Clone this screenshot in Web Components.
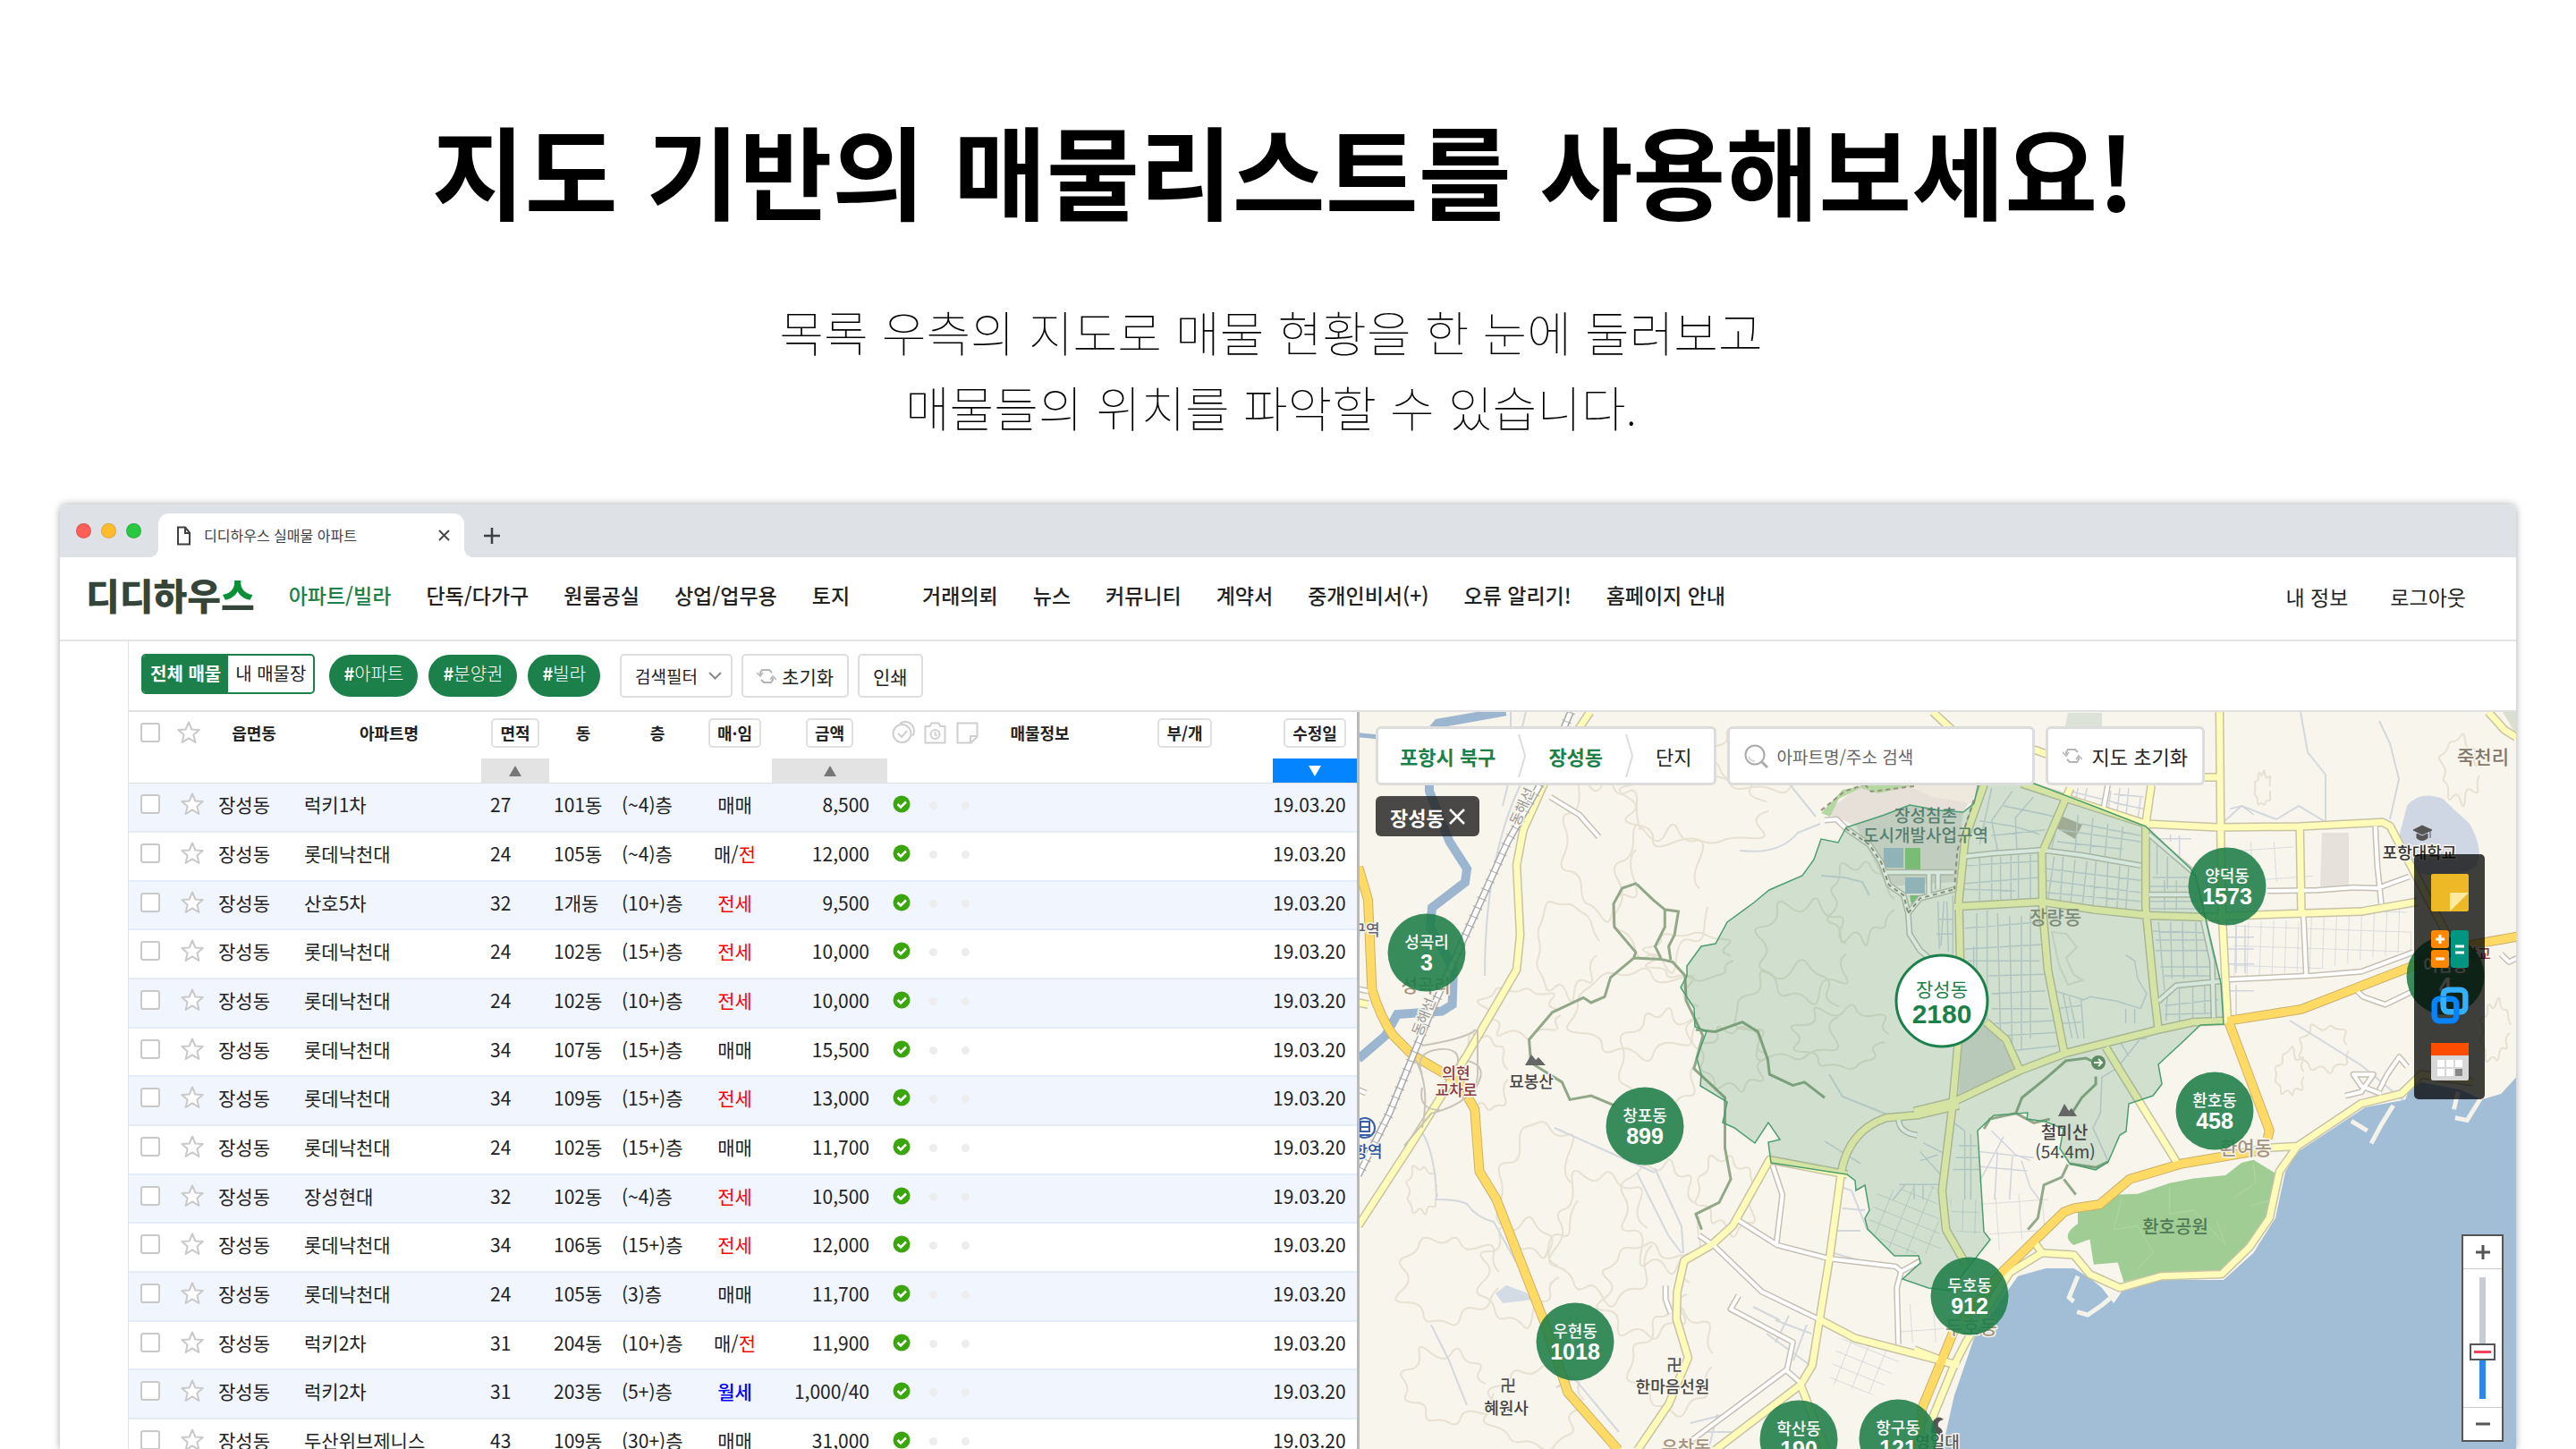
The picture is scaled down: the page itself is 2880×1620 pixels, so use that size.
<!DOCTYPE html>
<html lang="ko">
<head>
<meta charset="utf-8">
<title>디디하우스 실매물 아파트</title>
<style>
  html, body { margin: 0; height: 100%; }
  body {
    background: #fff; color: #222; overflow: hidden;
    font-family: "Noto Sans CJK KR", "Noto Sans", sans-serif;
    --green: #1b8049; --line: #e0e0e0;
  }
</style>
</head>
<body>
<promo-page>
  <promo-hero>
    <span slot="title">지도 기반의 매물리스트를 사용해보세요!</span>
    <span slot="line1">목록 우측의 지도로 매물 현황을 한 눈에 둘러보고</span>
    <span slot="line2">매물들의 위치를 파악할 수 있습니다.</span>
  </promo-hero>
  <browser-window>
    <span slot="tab">디디하우스 실매물 아파트</span>
    <site-nav></site-nav>
    <filter-bar slot="filters"></filter-bar>
    <listing-table slot="list"></listing-table>
    <map-panel slot="map">
      <map-pin x="75" y="269" count="3">성곡리</map-pin>
      <map-pin x="319" y="463" count="899">창포동</map-pin>
      <map-pin x="241" y="704" count="1018">우현동</map-pin>
      <map-pin x="491" y="813" count="190">학산동</map-pin>
      <map-pin x="602" y="812" count="121">항구동</map-pin>
      <map-pin x="682" y="653" count="912">두호동</map-pin>
      <map-pin x="956" y="446" count="458">환호동</map-pin>
      <map-pin x="970" y="195" count="1573">양덕동</map-pin>
      <map-pin x="1214" y="295" count="4">여남동</map-pin>
      <map-pin x="651" y="323" count="2180" active>장성동</map-pin>
    </map-panel>
  </browser-window>
</promo-page>

<script>
const base = `
  :host, *, *::before, *::after { box-sizing: border-box; }
  button, input, select { font: inherit; color: inherit; margin: 0; }
  button { background: none; border: 0; padding: 0; cursor: pointer; }
  a { color: inherit; text-decoration: none; }
  svg { display: block; }
`;
function define(name, markup, setup) {
  const tpl = document.createElement('template');
  customElements.define(name, class extends HTMLElement {
    constructor() {
      super();
      this.attachShadow({ mode: 'open' });
    }
    connectedCallback() {
      tpl.innerHTML = typeof markup === 'function' ? markup(this) : markup;
      this.shadowRoot.replaceChildren(tpl.content.cloneNode(true));
      if (setup) setup(this);
    }
  });
}

const refreshIcon = `<svg width="22" height="20" viewBox="0 0 22 20" fill="none" stroke="#b4b4b4" stroke-width="2">
  <path d="M4 8V6l2-3h8l3 3"/><path d="M0 6l4 4 3-4" stroke-width="1.5"/>
  <path d="M18 12v2l-2 3H8l-3-3"/><path d="M22 14l-4-4-3 4" stroke-width="1.5"/></svg>`;
const starIcon = `<svg width="26" height="26" viewBox="0 0 26 26" fill="#fff" stroke="#c9c9c9" stroke-width="2" stroke-linejoin="round">
  <path d="M13 1.5l3.4 8 8.3.6-6.3 5.5 2 8.4-7.4-4.6-7.4 4.6 2-8.4-6.3-5.5 8.3-.6z"/></svg>`;

define('promo-page', `<style>${base}
  :host { display: flex; flex-direction: column; height: 100vh; overflow: hidden; }
</style><slot></slot>`);

define('promo-hero', `<style>${base}
  :host { display: block; flex: none; text-align: center; color: #000; padding: 108px 0 67px; }
  h1 { margin: 0 10px 0 0; font-size: 113px; line-height: 160px; font-weight: 700; white-space: nowrap; }
  p { margin: 61px 38px 0 0; font-size: 54px; line-height: 84px; font-weight: 100; }
</style>
<h1><slot name="title"></slot></h1>
<p><slot name="line1"></slot><br><slot name="line2"></slot></p>`);

define('browser-window', `<style>${base}
  :host { display: flex; flex-direction: column; flex: 1; min-height: 0; margin: 0 67px; background: #fff;
    border-radius: 8px 8px 0 0; box-shadow: 0 0 8px rgba(0,0,0,.35); overflow: hidden; }
  header { display: flex; align-items: flex-end; height: 59px; flex: none; background: #dee1e6; }
  .lights { display: flex; gap: 11px; align-self: center; padding: 0 19px 0 18px; }
  .lights i { width: 17px; height: 17px; border-radius: 50%; border: 1px solid rgba(0,0,0,.12); }
  .tab { position: relative; display: flex; align-items: center; width: 342px; height: 49px; padding: 0 16px 0 20px;
    background: #fff; border-radius: 12px 12px 0 0; font-size: 16px; color: #3c4043; }
  .tab::before, .tab::after { content: ""; position: absolute; bottom: 0; width: 10px; height: 10px; }
  .tab::before { left: -10px; background: radial-gradient(circle at 0 0, transparent 10px, #fff 10px); }
  .tab::after { right: -10px; background: radial-gradient(circle at 100% 0, transparent 10px, #fff 10px); }
  .tab span { flex: 1; padding: 0 0 2px 14px; }
  .plus { height: 49px; padding-left: 22px; }
  .body { display: flex; flex: 1; min-height: 0; }
  aside { width: 77px; flex: none; border-right: 1px solid var(--line); }
  .work { display: flex; flex-direction: column; flex: 1; min-width: 0; }
  .split { display: flex; flex: 1; min-height: 0; }
  .list { flex: 1373 1 0; min-width: 0; overflow: hidden; }
  .map { flex: 1296 1 0; min-width: 0; display: flex; }
</style>
<header>
  <div class="lights"><i style="background:#ff5f57"></i><i style="background:#ffbd2e"></i><i style="background:#28c940"></i></div>
  <div class="tab">
    <svg width="17" height="22" viewBox="0 0 17 22" fill="none" stroke="#3c4043" stroke-width="2"><path d="M2 1.500h8l5 6V20.500H2z"/><path d="M10 2v6h5"/></svg>
    <span><slot name="tab"></slot></span>
    <button aria-label="탭 닫기"><svg width="13" height="13" viewBox="0 0 13 13" stroke="#45494d" stroke-width="2"><path d="M1 1l11 11M12 1L1 12"/></svg></button>
  </div>
  <button class="plus" aria-label="새 탭"><svg width="18" height="18" viewBox="0 0 18 18" stroke="#3c4043" stroke-width="2.500"><path d="M9 0v18M0 9h18"/></svg></button>
</header>
<slot></slot>
<div class="body"><aside></aside>
  <div class="work"><slot name="filters"></slot>
    <div class="split"><div class="list"><slot name="list"></slot></div><div class="map"><slot name="map"></slot></div></div>
  </div>
</div>`);

define('site-nav', `<style>${base}
  :host { display: flex; align-items: center; flex: none; height: 94px; padding: 0 56px 8px 29px; border-bottom: 2px solid #e4e4e4; font-size: 23px; white-space: nowrap; }
  .logo { font-size: 41px; line-height: 52px; font-weight: 900; color: #36453a; margin-right: 38px; padding-bottom: 2px; }
  .logo b { font-weight: 900; color: transparent; background: linear-gradient(#0a9039 66%, #36453a 66%); -webkit-background-clip: text; background-clip: text; }
  nav, .me { display: flex; }
  nav { gap: 39px; font-weight: 500; }
  nav .on { color: var(--green); }
  nav .gap { margin-left: 42px; }
  .me { margin-left: auto; gap: 47px; padding-top: 4px; }
</style>
<a class="logo" href="#">디디하우<b>스</b></a>
<nav>
  <a class="on" href="#">아파트/빌라</a><a href="#">단독/다가구</a><a href="#">원룸공실</a><a href="#">상업/업무용</a><a href="#">토지</a>
  <a class="gap" href="#">거래의뢰</a><a href="#">뉴스</a><a href="#">커뮤니티</a><a href="#">계약서</a><a href="#">중개인비서(+)</a><a href="#">오류 알리기!</a><a href="#">홈페이지 안내</a>
</nav>
<div class="me"><a href="#">내 정보</a><a href="#">로그아웃</a></div>`);

define('filter-bar', `<style>${base}
  :host { display: flex; align-items: center; flex: none; height: 79px; padding: 0 14px; border-bottom: 2px solid var(--line); font-size: 20px; white-space: nowrap; }
  .seg { display: flex; height: 45px; margin: 0 16px 4px 0; border: 2px solid var(--green); border-radius: 5px; overflow: hidden; }
  .seg button { padding: 0 8px 3px; }
  .seg .on { background: var(--green); color: #fff; font-weight: 700; }
  .tags { display: flex; gap: 12px; margin-right: 22px; }
  .tags button { height: 47px; padding: 0 16px 6px; border-radius: 24px; background: var(--green); color: #fff; font-weight: 300; }
  .tags b { font-weight: 700; }
  .tools { display: flex; gap: 10px; }
  .tools button, .pick { display: flex; align-items: center; height: 49px; border: 2px solid #dedede; border-radius: 5px; background: #fff; }
  .tools button { gap: 6px; padding: 0 15px; font-size: 21px; }
  .pick { position: relative; font-size: 19px; }
  select { appearance: none; border: 0; background: none; width: 122px; height: 45px; padding: 0 36px 0 15px; }
  .pick svg { position: absolute; right: 10px; pointer-events: none; }
</style>
<div class="seg"><button class="on">전체 매물</button><button>내 매물장</button></div>
<div class="tags"><button><b>#</b>아파트</button><button><b>#</b>분양권</button><button><b>#</b>빌라</button></div>
<div class="tools">
  <div class="pick"><select aria-label="검색필터"><option>검색필터</option></select>
    <svg width="15" height="9" viewBox="0 0 15 9" fill="none" stroke="#888" stroke-width="2"><path d="M1 1l6.500 6.500L14 1"/></svg></div>
  <button>${refreshIcon}초기화</button><button>인쇄</button>
</div>`);

const rows = [
  ['럭키1차','27','101동','(~4)층','매매','8,500'],
  ['롯데낙천대','24','105동','(~4)층','매/전','12,000'],
  ['산호5차','32','1개동','(10+)층','전세','9,500'],
  ['롯데낙천대','24','102동','(15+)층','전세','10,000'],
  ['롯데낙천대','24','102동','(10+)층','전세','10,000'],
  ['롯데낙천대','34','107동','(15+)층','매매','15,500'],
  ['롯데낙천대','34','109동','(15+)층','전세','13,000'],
  ['롯데낙천대','24','102동','(15+)층','매매','11,700'],
  ['장성현대','32','102동','(~4)층','전세','10,500'],
  ['롯데낙천대','34','106동','(15+)층','전세','12,000'],
  ['롯데낙천대','24','105동','(3)층','매매','11,700'],
  ['럭키2차','31','204동','(10+)층','매/전','11,900'],
  ['럭키2차','31','203동','(5+)층','월세','1,000/40'],
  ['두산위브제니스','43','109동','(30+)층','매매','31,000']
];
const deal = t => t === '매/전' ? '매/<em>전</em>' : t === '전세' ? '<em>전세</em>' : t === '월세' ? '<u>월세</u>' : t;
const okIcon = `<svg width="20" height="20" viewBox="0 0 20 20"><circle cx="10" cy="10" r="9.500" fill="#3aa60c"/><path d="M5.500 10l3.500 3.500 6-6" fill="none" stroke="#fff" stroke-width="2.500"/></svg>`;

define('listing-table', `<style>${base}
  :host { display: block; }
  table { width: 100%; table-layout: fixed; border-collapse: separate; border-spacing: 0; font-size: 21px; line-height: 28px; white-space: nowrap; }
  th, td { padding: 0; vertical-align: middle; }
  th { height: 52px; padding-bottom: 6px; font-size: 18px; font-weight: 700; }
  th button { height: 33px; padding: 0 8px 2px; border: 2px solid var(--line); border-radius: 5px; font-weight: 700; }
  .sort th { height: 28px; padding: 0; border-bottom: 1px solid var(--line); }
  .sort .bar { background: #e3e3e3; }
  .sort .desc { background: #0584ff; }
  th svg, td svg { margin: 0 auto; }
  td { height: 55px; padding-bottom: 7px; border-bottom: 2px solid #e3ecf8; }
  tbody tr:nth-child(3n) td { height: 54px; }
  tbody tr:nth-child(odd) { background: #f0f5fe; }
  .c { text-align: center; }
  .dong, .name { padding-left: 8px; } .area { padding-left: 10px; } .bd, .fl { padding-left: 5px; }
  .price { text-align: right; padding-right: 20px; }
  .date { text-align: right; padding-right: 19px; }
  .flag { padding-right: 3px; }
  em { font-style: normal; color: #f00; } u { text-decoration: none; color: #00f; font-weight: 500; }
  input { appearance: none; display: block; width: 22px; height: 22px; margin: 0 auto; border: 2px solid #c9c9c9; border-radius: 3px; background: #fff; }
  td .star { display: block; margin-left: 10px; } th .star { border: 0; padding: 0; height: auto; display: block; margin-left: 6px; }
  .dot { display: block; width: 9px; height: 9px; border-radius: 50%; background: #ededed; margin: 3px auto 0; }
</style>
<table>
  <colgroup>${[48,44,96,206,76,76,90,83,129,35,36,36,127,197,94].map(w => `<col style="width:${w}px">`).join('')}</colgroup>
  <thead>
    <tr><th><input type="checkbox" aria-label="전체 선택"></th><th><button class="star" aria-label="관심 매물">${starIcon}</button></th>
      <th>읍면동</th><th>아파트명</th><th><button>면적</button></th><th>동</th><th>층</th><th><button>매·임</button></th><th><button>금액</button></th>
      <th><svg width="26" height="26" viewBox="0 0 26 26" fill="none" stroke="#cfcfcf" stroke-width="2"><circle cx="11.500" cy="14" r="10"/><path d="M9 3a10 10 0 0 1 14 14M7 14l4 4 6-7"/></svg></th>
      <th><svg width="25" height="25" viewBox="0 0 25 25" fill="none" stroke="#cfcfcf" stroke-width="2"><path d="M1.500 5h5l2-3.500h8l2 3.500h5v18.500h-22z"/><circle cx="12.500" cy="14" r="5"/><path d="M12.500 11v3l2 2"/></svg></th>
      <th><svg width="25" height="25" viewBox="0 0 25 25" fill="none" stroke="#cfcfcf" stroke-width="2"><path d="M1.500 1.500h22v15l-7 7h-15z"/><path d="M23 16h-7v7"/></svg></th>
      <th>매물정보</th><th><button>부/개</button></th><th><button>수정일</button></th></tr>
    <tr class="sort"><th></th><th></th><th></th><th></th><th class="bar"><svg width="14" height="12"><path d="M7 0l7 12H0z" fill="#777"/></svg></th><th></th><th></th><th></th>
      <th class="bar"><svg width="14" height="12"><path d="M7 0l7 12H0z" fill="#777"/></svg></th><th></th><th></th><th></th><th></th><th></th>
      <th class="desc"><svg width="14" height="12"><path d="M7 12L0 0h14z" fill="#fff"/></svg></th></tr>
  </thead>
  <tbody>${rows.map(r => `<tr><td><input type="checkbox" aria-label="${r[0]} 선택"></td><td><button class="star" aria-label="관심 매물">${starIcon}</button></td>
    <td class="dong">장성동</td><td class="name">${r[0]}</td><td class="area">${r[1]}</td><td class="bd">${r[2]}</td><td class="fl">${r[3]}</td>
    <td class="c">${deal(r[4])}</td><td class="price">${r[5]}</td><td class="flag">${okIcon}</td><td class="flag"><i class="dot"></i></td><td class="flag"><i class="dot"></i></td><td></td><td></td><td class="date">19.03.20</td></tr>`).join('')}</tbody>
</table>`);

define('map-pin', el => `<style>${base}
  :host { position: absolute; left: ${el.getAttribute('x')}px; top: ${el.getAttribute('y')}px; transform: translate(-50%, -50%); }
  button { display: flex; flex-direction: column; align-items: center; justify-content: center; width: 87px; height: 87px; border-radius: 50%;
    background: rgba(27,124,70,.87); color: #fff; font-size: 18px; font-weight: 500; line-height: 21px; }
  b { font: 700 25px/26px "Liberation Sans", sans-serif; }
  :host([active]) button { width: 105px; height: 105px; background: #fff; border: 3px solid var(--green); color: var(--green); font-size: 21px; line-height: 28px; font-weight: 400; }
  :host([active]) b { font-size: 30px; line-height: 30px; }
</style>
<button><slot></slot><b>${el.getAttribute('count')}</b></button>`);

/* Map drawing: survey tiles (west, east, district) share one canvas. */
const T = { w: 'translate(1510 940) scale(.4337)', e: 'translate(2140 940) scale(.4464 .4337)', d: 'translate(2040 860) scale(.3333)', n: '' };
const roads = [
  ['white','w','M1088 835L1113 910 1098 1035M990 970L1100 1040 1235 1075 1405 1095 1420 1108 1470 1080M898 1015L935 1040 1060 1160 1205 1230M1000 1170L980 1205 1140 1290 1125 1360 870 1550M1120 1360L1160 1395M1420 1105L1408 1150 1412 1295M812 1145L812 1180 825 1215M515 -115L590 -69 640 -12M20 380L45 385M20 640L40 648'],
  ['white','e','M885 127L1010 125 1100 118 1160 120 1240 90M1155 -40L1160 60 1170 160M975 190L982 345M790 355L1000 345 1120 335 1250 285M1110 385L1125 400 1180 420 1260 380M1080 655L1120 645 1150 600 1100 600 1120 630 1170 650M1165 640L1185 600 1215 555 1235 580M1470 290L1490 310 1510 300'],
  ['white','d','M0 168L40 165 70 195 150 250 190 310 215 385 265 420 280 480 285 550 320 605 350 630M205 343L432 343M350 343V420M380 343V400M280 480L320 430 435 400M465 290L560 280 730 268 860 285 1060 320M1088 418H1230M1270 505L1300 640 1305 830M1120 775L1180 722 1330 708M248 1172Q250 1215 310 1225M950 50L935 130M1088 215L1240 345'],
  ['yellow','w','M617 -334L520 -190 497 -146 445 -30 428 60 437 240 428 330 300 550 150 790 20 990M1280 858L1080 820 985 990 930 1040 860 1080 842 1160 840 1230 870 1330 820 1450 740 1568M1265 850L1235 1070 1190 1350 1160 1400 940 1568M1205 1230L1300 1280 1568 1350M1160 1400L1225 1568M20 415L45 420M1265 850Q1285 745 1380 712L1460 705 1568 680'],
  ['yellow','n','M2161 795L2190 822 2277 838 2310 850M2782 795L2800 815 2813 823M2465 868H2482'],
  ['yellow','e','M175 -147L128 -10 112 150 118 430 95 690 70 900 80 1000 130 1090M391 -138L320 30 322 180 335 330 375 540M100 168L320 155 450 175 590 190 730 195 880 188 1120 180 1260 155M594 -146L580 -46 580 170 600 380 612 485M269 -150L372 -115 580 -46 760 -37 966 -39 1174 -50 1192 -40 1340 250M765 -334L768 0 772 200 785 460M966 -36L970 188M0 695L100 670 265 590 380 545 610 485 700 465 780 462M180 465L230 510 265 590M480 530L660 830M870 790L960 785 1120 675 1220 650 1270 600 1400 620M960 785L915 850 890 970 840 1045 770 1115 620 1120 515 1150 440 1115 400 1065 320 1060 240 1110 130 1290 100 1350 40 1500M300 1030L320 1060M0 1310L90 1345'],
  ['orange','w','M20 65L45 150 55 380Q75 450 110 500L160 550 280 620 320 690 332 850 375 920 500 1240 560 1420 690 1568'],
  ['orange','e','M785 462L970 432 1250 320 1400 265 1510 245M788 465L890 745 885 765M870 795L670 830 540 870 465 935 400 945 375 955 220 1110 100 1260 20 1460 10 1568']
];
const style = { white: ['#c6c0b4', 7, '#fff', 4], yellow: ['#c8c3a6', 10, '#fffbb8', 7], orange: ['#cdb06a', 11, '#ffdb66', 9] };
const stroke = (i, j) => roads.map(([k, t, d]) => `<path transform="${T[t]}" d="${d}" stroke="${style[k][i]}" stroke-width="${style[k][j]}"/>`).join('');

/* Contour rings with a repeatable wobble. */
let seed = 7;
const rnd = () => (seed = (seed * 16807) % 2147483647) / 2147483647;
function ring(cx, cy, rx, ry) {
  const n = 18, p = [];
  for (let i = 0; i < n; i++) {
    const a = i / n * Math.PI * 2, k = (i % 2 ? .5 : .85) + rnd() * .35;
    p.push([cx + Math.cos(a) * rx * k, cy + Math.sin(a) * ry * k]);
  }
  let d = '';
  p.forEach((q, i) => { const r = p[(i + 1) % n], m = [(q[0] + r[0]) / 2, (q[1] + r[1]) / 2].map(Math.round); d += i ? `Q${Math.round(q[0])} ${Math.round(q[1])} ${m}` : `M${m}`; });
  return d;
}
const rings = [[1860,1000,60,90],[1900,900,90,50],[1790,940,50,90],[1980,850,90,40],[1830,1130,80,60],[1860,1180,50,70],[1750,1060,40,60],[1720,1330,50,90],[1790,1380,60,80],
 [1700,1420,50,60],[1840,1440,60,60],[1860,1350,50,70],[1620,1430,60,60],[1620,1550,60,50],[1720,1570,60,50],[1870,1520,50,60],[2020,1060,60,60],[2000,1130,70,60],[2080,1010,40,50],[2060,1160,60,40],
 [1940,1180,40,40],[1930,1330,40,50],[2600,1170,30,30],[2560,1200,20,30],[2750,860,25,40],[2530,880,10,20],[1660,1200,30,50],[1590,1330,20,30],[2790,1150,20,40],[1890,1070,60,30],[1700,1130,50,30]]
 .map(r => `<path d="${ring(...r)}"/>`).join('');

/* Local streets inside the district tile. */
const streets = 'M560 60L520 250M630 70L560 170 580 270M700 90L640 160 645 270M520 170L640 190 720 215M600 120L770 155M560 220L740 200M790 130L760 270M850 150L840 270M900 160L890 280M950 180L940 290M1000 190L990 300M790 200L1060 240M860 180L1060 220M780 240L1000 265' +
  'M520 290V440M560 290V440M590 290V440M625 285V435M650 285V435M690 280V430M470 320L720 305M470 380L720 360M465 400L640 405M770 290L750 430M800 290L790 440M840 300L825 445M880 305L865 450M910 305L900 460M950 310L945 465M990 320L980 470M1020 325L1010 470M740 330L1060 370M740 370L1060 410M740 410L1060 440' +
  'M510 480V700M545 470V900M580 480L590 900M620 490L630 980M660 490V940M690 480V900M470 530L720 510M470 600L730 585M480 640L720 640M550 690L740 685M560 750L740 740M560 800L750 800M570 850L770 840M600 890L780 880M640 940L780 925M500 590V690M400 440L390 590M380 440L385 600M410 440L415 610M430 420V620M380 500H430M375 550H430' +
  'M1120 510L1140 740M1160 510L1165 700M1200 510L1205 700M1245 510L1250 690M1100 540L1270 545M1110 570H1280M1110 605H1290M1125 660H1300M1140 690L1300 690M1100 360H1220M1090 390H1220M1140 370V470M1180 370V470M1090 440H1260M1090 465H1260M1115 230V350M1150 290V400M1150 740L1145 840M1190 730V840M1235 720V830M1275 720V820M1140 790L1320 770M1140 820L1300 815' +
  'M770 740L870 770 890 760 980 775 1060 800M800 750L830 900M820 760L850 900M770 800L860 790M790 850L860 845M860 770L870 900M1010 620L1040 640 1050 700 1080 750 1060 800M1010 800V850M1040 800V850M1060 900L980 1000 930 1030 925 1150 900 1200 950 1310M990 910L1020 960M940 910L1080 900' +
  'M540 60L520 80M820 70L1020 120M850 60L840 110M880 60L870 110M960 70L950 140M990 60L980 150M1020 60L1010 160M1060 90L1050 170M970 80L1070 90M970 110L1070 130' +
  'M1090 230H1230M1160 215V240M1190 220V300M1360 130L1400 120 1440 150M1345 560H1440M1345 600H1440M1380 520V680M1410 520V680M1345 650H1440M1350 740H1440M1380 720V820' +
  'M0 1245L120 1320M320 1280L400 1370M330 1250L410 1290M320 1310L380 1290M470 1210L430 1180M450 1260H510M440 1300H520M430 1340L520 1340M470 1210V1440M490 1220V1440M250 1390L390 1390M230 1440L270 1390M300 1390V1440M330 1390V1440M520 1280L700 1300M560 1210L640 1290 690 1310M600 1230L520 1380M660 1310L690 1400 720 1440M520 1330L680 1345M580 1280L570 1440M630 1290L620 1440';
const quad = (pts, p) => `<polygon points="${pts}" fill="url(#${p})"/>`;
const label = (x, y, s, c, t, w = 500, h = 3) => `<text x="${x}" y="${y}" font-size="${s}" fill="${c}" font-weight="${w}" stroke-width="${h}">${t}</text>`;
const district = 'M2274 875L2340 900 2399 923 2449 970 2455 979 2483 1098 2486 1144 2460 1145 2439 1165 2413 1189 2417 1211 2407 1224 2380 1233 2377 1264 2370 1268 2357 1298 2343 1307 2314 1300 2303 1283 2307 1261 2287 1253 2266 1250 2267 1243 2229 1246 2211 1263 2218 1376 2225 1385 2180 1442 2156 1439 2127 1429 2147 1411 2145 1403 2118 1403 2088 1373 2085 1361 2090 1352 2085 1324 2075 1330 2074 1319 2065 1312 1980 1299 1977 1276 1990 1273 1977 1254 1962 1277 1939 1260 1926 1254 1931 1231 1901 1213 1902 1200 1897 1182 1908 1152 1895 1147 1894 1126 1879 1103 1886 1090 1886 1079 1902 1057 1918 1054 1931 1030 1961 1008 1978 994 2015 978 2028 960 2036 937 2055 941 2064 924 2098 913 2107 910 2135 899 2168 905 2195 907 2207 897 2212 875z';

const mapSvg = `<svg viewBox="1520 795 1293 825" preserveAspectRatio="xMinYMin slice" aria-label="포항시 북구 지도">
<defs>
  <pattern id="g1" width="14" height="22" patternUnits="userSpaceOnUse" patternTransform="rotate(2)"><path d="M0 0H14M0 0V22" stroke="#d0d4d9" stroke-width="1.500" fill="none"/></pattern>
  <pattern id="g2" width="20" height="15" patternUnits="userSpaceOnUse" patternTransform="rotate(22)"><path d="M0 0H20M0 0V15" stroke="#d0d4d9" stroke-width="1.500" fill="none"/></pattern>
  <pattern id="g3" width="26" height="34" patternUnits="userSpaceOnUse" patternTransform="rotate(-4)"><path d="M0 0H26M0 0V34" stroke="#d0d4d9" stroke-width="1.500" fill="none"/></pattern>
</defs>
<rect x="1520" y="795" width="1293" height="825" fill="#f8f5ec"/>
<path d="M2040 908L2080 877H2212L2195 907 2186 985 2110 990 2075 922z" fill="#e6e0d9"/>
<path d="M2132 877H2212L2204 897 2160 890z" fill="#efe8dc"/>
<path d="M2036 908L2060 882 2085 877 2140 877 2100 886 2080 880 2056 892 2046 912z" fill="#b5d8a3"/>
<path d="M2036 905L2062 884 2084 876M2085 876L2092 884 2140 878" fill="none" stroke="#9a8f80" stroke-width="2" stroke-dasharray="5 4"/>
<path d="M2596 930H2626V990H2594z" fill="#e6e2db"/><path d="M2312 796h38v18h-42z" fill="#dde2d8"/><path d="M2798 795h15v25z" fill="#dadfd2"/>
<path d="M2304 911l24 10-8 16-24-14z" fill="#bdb5a6"/>
<path d="M2193 1150L2221 1140 2257 1193 2190 1222z" fill="#dcdad2"/>
<path d="M2691 900Q2705 882 2731 892L2761 920Q2778 950 2768 968 2740 984 2700 974L2682 935z" fill="#ced7e3"/>
<path d="M1672 1445L1684 1436 1706 1444 1714 1452 1680 1456z" fill="#d3dbe4"/>
<g fill="none" stroke="#e7e1d2" stroke-width="2">${rings}<path d="M2294 1041L2310 1043 2322 1058 2310 1070 2318 1088 2328 1095 2312 1100 2302 1078z"/></g>
<g fill="none" stroke="#d3d8dd" stroke-width="2">
  <path d="M1689 795V850M1700 876Q1660 960 1660 1090M1706 795L1680 900M1738 1260L1850 1310M1850 1305L1880 1370 1882 1400M1830 1310L1865 1380 1880 1400M1590 1265Q1605 1290 1606 1340 1630 1340 1640 1345 1650 1360 1670 1365L1695 1410M2572 795L2580 840 2600 865 2600 925M2660 805L2672 830 2682 870 2672 915M2486 918L2506 900 2545 915 2570 900 2600 918M2001 876L2030 912M1945 950Q1990 955 2010 930L2035 920M2560 1140L2640 1190 2700 1240M1740 1550L1760 1540 1810 1600M1600 1480L1620 1520 1640 1570M2036 978L2062 980 2082 985 2090 1000M2045 1200L2060 1225 2110 1245 2150 1242"/>
  <path d="M2055 1325L2070 1330 2088 1375M2050 1400L2085 1410M2060 1350L2085 1352M2050 1375L2080 1375M1975 1490L2030 1530M1985 1475L2025 1490M2000 1470L1985 1500M2020 1480L2005 1520M2030 1490L2020 1530M1960 1460L1990 1475M1890 1590L1930 1580M1900 1600L1940 1600M1920 1580L1910 1620"/>
</g>
<path transform="${T.d}" d="${streets}" fill="none" stroke="#d0d4dc" stroke-width="1.500"/>
${quad('2497,1030 2570,1028 2575,1085 2497,1092','g1')}${quad('2580,1025 2690,1015 2700,1060 2580,1085','g1')}
${quad('2213,1340 2290,1330 2290,1370 2230,1400','g3')}${quad('2100,1330 2165,1325 2170,1400 2118,1400 2088,1370','g2')}
${quad('2180,1340 2210,1340 2215,1380 2185,1375','g1')}${quad('2120,1455 2170,1460 2175,1500 2125,1500','g3')}
${quad('2055,1495 2130,1510 2100,1560 2045,1545','g2')}${quad('2500,940 2560,940 2590,985 2500,985','g3')}
<path d="M2106 947h22v22h-22zM2130 980h22v18h-22z" fill="#a9bfcf"/><path d="M2130 947h17v24h-17zM2135 1000h14l-12 10z" fill="#8fc97f"/>
<g fill="none" stroke="#9cb6d0" stroke-width="10" transform="${T.w}">
  <path d="M400 -336L225 -305 200 -275 203 -130 255 0 300 70 295 105 210 170 205 220 245 290 265 330 262 420 235 437 120 445 90 500 20 560"/><path stroke-width="5" d="M20 -275L90 -268"/></g>
<g transform="${T.e}"><path d="M1510 605L1470 650 1420 665 1370 640 1270 620 1240 640 1230 665 1130 685 960 800 930 850 905 970 850 1060 775 1130 620 1130 520 1160 500 1190 470 1150 440 1125 400 1100 330 1100 260 1120 150 1280 100 1430 70 1568H1510z" fill="#a2bdd6"/>
  <path d="M410 955L500 910 560 908 640 880 700 868 780 860 820 828 850 820 905 855 890 970 840 1045 770 1110 620 1112 525 1135 510 1085 450 1090 440 1025 400 1040Q365 1015 410 985z" fill="#9fcd94"/>
  <g fill="none" stroke="#b0d6a4"><path d="M520 920L500 1000 560 990 600 1060 560 1100M640 890V960L700 950 780 1040 760 980M840 940L890 925M850 830L855 880 800 920"/></g>
  <g fill="none" stroke="#f5f2ea"><path class="pier" d="M410 1120L388 1175 400 1185M505 1165L470 1195 435 1220 408 1212M1200 680L1170 730 1145 778M1095 720L1135 745M1362 645L1352 690M1420 660L1385 718 1355 712"/></g>
</g>
<g fill="none" stroke-linejoin="round" stroke-linecap="butt">${stroke(0, 1)}${stroke(2, 3)}</g>
<path transform="${T.d}" d="M70 195L150 250 190 310 215 385 265 420 280 480M500 100L445 270 435 400M280 480L320 430 435 400" fill="none" stroke="#9a9280" stroke-width="2" stroke-dasharray="5 4"/>
<g fill="none" stroke="#c9c4b8" stroke-width="2"><path d="M1590 1168Q1640 1160 1650 1150M1590 1200Q1580 1175 1610 1172 1640 1170 1625 1200M1590 1215Q1585 1240 1610 1240M1640 1185Q1665 1190 1650 1215 1640 1225 1630 1215M1652 1150V1200Q1652 1230 1600 1244L1570 1280M1580 1180Q1600 1210 1590 1260"/></g>
<g transform="${T.w}" fill="none"><path d="M567 -334L490 -150 405 0 215 420 100 700 20 860" stroke="#a9a9a9" stroke-width="8"/><path d="M567 -334L490 -150 405 0 215 420 100 700 20 860" stroke="#fff" stroke-width="5"/><path d="M567 -334L490 -150 405 0 215 420 100 700 20 860" stroke="#a9a9a9" stroke-width="11" stroke-dasharray="1 10"/></g>
<g transform="${T.w}" fill="none" stroke="#93a888" stroke-width="3"><path d="M738 107L700 120 678 160 680 220 735 285 730 300 800 303 830 310 862 345 865 410 908 500 885 585 965 660 965 790 980 870 950 930 890 960 905 1000M738 110L780 150 810 175 810 220 785 270 800 300M812 175L845 180 835 240 820 270 825 305M730 300L670 350 655 400 620 415 600 402 520 440 460 510 465 570 545 620 565 665 620 655 680 680M890 485L940 490 1010 465 1050 490 1075 560 1080 600 1140 628 1170 620 1222 660"/></g>
<g transform="${T.e}" fill="none" stroke="#93a888" stroke-width="3"><path d="M445 565L430 558 380 565 330 610 270 660 255 700 190 715 175 740M255 700L300 725 340 715M455 605V625L420 660 395 700M385 832L370 865 325 885 310 970 285 1000M390 830L455 840 486 825M375 870L405 910"/></g>
<path d="${district}" fill="#1b8049" fill-opacity=".18" stroke="#4c9e70" stroke-width="1.500"/>
<path d="M1705 1190l7-12 5 6 3-3 8 9z M2301 1247l7-14 5 8 3-3 6 9z" fill="#666"/>
<circle cx="2346" cy="1187" r="8" fill="#5f8a66"/><path d="M2341 1187h9m-4-4l4 4-4 4" fill="none" stroke="#e6f0e4" stroke-width="2"/>
<path d="M2708 922l-10 5 10 5 11-5zM2702 931v5q6 5 12 0v-5l-6 3zM2717 928v8" fill="#555" stroke="#555"/>
<circle cx="1526" cy="1260" r="11" fill="#fff" stroke="#3a5fa5" stroke-width="2"/><path d="M1521 1253h10v11h-10zM1520 1268h12M1522 1259h8" stroke="#3a5fa5" stroke-width="2" fill="none"/>
<path d="M2161 1588q6-8 12-2-8 2-6 8 8 4 2 10-10 4-10-6z" fill="#555"/>
<g text-anchor="middle" stroke="#f8f5ec" stroke-linejoin="round" paint-order="stroke">
  ${label(1712,1215,18,'#444','묘봉산')}${label(1628,1205,17,'#8a3a40','의현')}${label(1628,1224,17,'#8a3a40','교차로')}${label(1594,1109,20,'#a3937f','성곡리')}
  ${label(1870,1556,18,'#444','한마음선원')}${label(1684,1580,18,'#444','혜원사')}${label(1872,1532,18,'#555','卍')}${label(1686,1555,18,'#555','卍')}
  ${label(1885,1625,20,'#a3937f','우창동')}${label(1529,1293,18,'#2d55a0','항역')}${label(1527,1045,17,'#667','구역')}
  ${label(2298,1032,21,'#7f8c78','장량동',500,0)}${label(2308,1272,19,'#444','철미산',500,0)}${label(2309,1294,19,'#444','(54.4m)',400,0)}
  ${label(2432,1378,20,'#4f7a55','환호공원',500,0)}${label(2511,1290,21,'#a3937f','환여동')}${label(2705,959,18,'#333','포항대학교')}
  ${label(2204,1490,21,'#a3937f','두호동')}${label(2166,1618,18,'#555','영일대')}${label(2776,853,21,'#85786a','죽천리')}
  ${label(2153,918,19,'#567f6f','장성침촌',500,0)}${label(2153,940,19,'#567f6f','도시개발사업구역',500,0)}${label(2770,1071,16,'#8a3a40','학교')}
  <text transform="translate(1597 1138) rotate(-68)" font-size="16" fill="#999" stroke-width="3">동해선</text><text transform="translate(1707 903) rotate(-66)" font-size="16" fill="#999" stroke-width="3">동해선</text>
</g></svg>`;

define('map-panel', `<style>${base}
  :host { position: relative; display: block; flex: 1; min-width: 0; border-left: 3px solid #b9b9b9; overflow: hidden; background: #f8f5ec; font-size: 22px; white-space: nowrap; }
  .canvas { position: absolute; inset: 0; }
  .canvas > svg { width: 100%; height: 100%; }
  .canvas path { vector-effect: non-scaling-stroke; }
  .pier { stroke-width: 5; }
  .over { position: relative; display: flex; flex-direction: column; align-items: flex-start; gap: 12px; padding: 16px 18px; }
  .row { display: flex; gap: 12px; }
  .box { display: flex; align-items: center; height: 66px; border: 3px solid #dcdcdc; border-radius: 6px; background: #fff; }
  .crumbs { padding: 0 24px; gap: 25px; }
  .crumbs a { color: var(--green); font-weight: 700; } .crumbs a:last-child { color: #222; font-weight: 400; }
  .search { width: 344px; padding: 0 16px; gap: 10px; font-size: 19px; }
  input[type=search] { flex: 1; min-width: 0; height: 40px; border: 0; outline: 0; background: none; padding: 0; }
  input::placeholder { color: #666; opacity: 1; }
  .reset { padding: 0 16px; gap: 11px; }
  .chip { display: flex; align-items: center; gap: 5px; height: 45px; padding: 0 16px; border-radius: 6px; background: rgba(34,34,34,.82); color: #fff; font-weight: 700; }
  .dock { position: absolute; right: 35px; top: 159px; display: flex; flex-direction: column; align-items: center; gap: 21px; width: 79px; padding: 22px 0 21px; border-radius: 5px; background: rgba(0,0,0,.75); z-index: 2; }
  .zoom { position: absolute; right: 14px; top: 584px; width: 47px; height: 232px; display: flex; flex-direction: column; align-items: center; background: #fff; border: 2px solid #555; z-index: 2; }
  .zoom button { display: flex; align-items: center; justify-content: center; width: 100%; height: 36px; flex: none; }
  .zoom label { display: flex; flex: 1; align-items: center; justify-content: center; width: 100%; border: solid #ccc; border-width: 1px 0; }
  input[type=range] { appearance: none; writing-mode: vertical-lr; direction: rtl; width: 29px; height: 136px; background: linear-gradient(#c9cdd1 62%, #2d87ee 62%) center / 7px 100% no-repeat; }
  input[type=range]::-webkit-slider-thumb { appearance: none; width: 29px; height: 19px; border: 2px solid #555; background: linear-gradient(#f04458, #f04458) center / 19px 3px no-repeat #fff; }
</style>
<div class="canvas">${mapSvg}<slot></slot></div>
<div class="over">
  <div class="row">
    <div class="box crumbs"><a href="#">포항시 북구</a><svg width="9" height="48" viewBox="0 0 9 48" fill="none" stroke="#ddd" stroke-width="2"><path d="M1 0l7 24-7 24"/></svg><a href="#">장성동</a><svg width="9" height="48" viewBox="0 0 9 48" fill="none" stroke="#ddd" stroke-width="2"><path d="M1 0l7 24-7 24"/></svg><a href="#">단지</a></div>
    <label class="box search"><svg width="27" height="27" viewBox="0 0 27 27" fill="none" stroke="#aaa" stroke-width="2"><circle cx="12" cy="12" r="10.500"/><path d="M5 14q2 5 7 5" stroke-width="1.500" stroke="#ccc"/><path d="M20 20l6 6" stroke-width="3"/></svg><input type="search" placeholder="아파트명/주소 검색" aria-label="아파트명/주소 검색"></label>
    <button class="box reset">${refreshIcon}지도 초기화</button>
  </div>
  <button class="chip">장성동<svg width="18" height="18" viewBox="0 0 18 18" stroke="#fff" stroke-width="2.500"><path d="M1 1l16 16M17 1L1 17"/></svg></button>
</div>
<div class="dock">
  <button aria-label="메모"><svg width="42" height="42"><rect width="42" height="42" rx="2" fill="#edb926"/><path d="M21 42V21h21z" fill="#ffeba0"/></svg></button>
  <button aria-label="계산기"><svg width="42" height="42"><rect width="20" height="20" rx="3" fill="#ff8800"/><rect y="22" width="20" height="20" rx="3" fill="#ff8800"/><rect x="22" width="20" height="42" rx="3" fill="#009682"/><path d="M10 5v10M5 10h10M5 32h10M27 18h10M27 25h10" stroke="#fff" stroke-width="3"/></svg></button>
  <button aria-label="링크"><svg width="46" height="42" viewBox="0 0 46 46" fill="none" stroke-width="7"><rect x="15" y="4" width="27" height="27" rx="6" stroke="#35b0ff"/><rect x="4" y="15" width="27" height="27" rx="6" stroke="#0584ff"/><path d="M15 22V13" stroke="#35b0ff"/></svg></button>
  <button aria-label="일정"><svg width="42" height="42"><rect width="42" height="42" rx="2" fill="#d8d8d8"/><path d="M0 14V2q0-2 2-2h38q2 0 2 2v12z" fill="#ff4d00"/><path d="M7 19h8v8H7zM17 19h8v8h-8zM27 19h8v8h-8zM7 29h8v8H7zM17 29h8v8h-8z" fill="#fff"/><path d="M27 29h8v8h-8z" fill="#888"/></svg></button>
</div>
<div class="zoom">
  <button aria-label="확대"><svg width="16" height="16" stroke="#555" stroke-width="3"><path d="M8 0v16M0 8h16"/></svg></button>
  <label><input type="range" min="0" max="100" value="37" aria-label="지도 배율"></label>
  <button aria-label="축소"><svg width="16" height="16" stroke="#555" stroke-width="3"><path d="M0 8h16"/></svg></button>
</div>`);
</script>
</body>
</html>
